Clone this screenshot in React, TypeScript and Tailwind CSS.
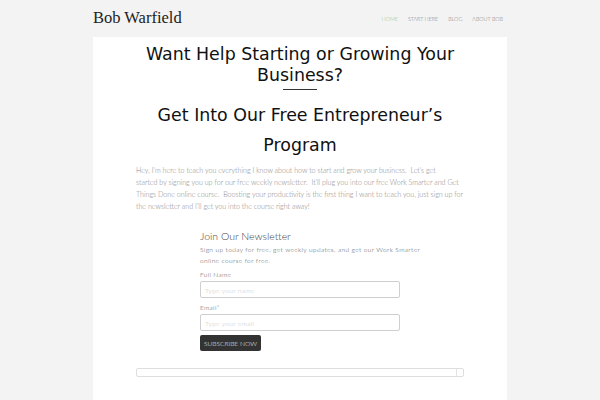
import React from "react";

const bodyFont = { fontFamily: "Lato, 'Open Sans', sans-serif" };

export default function App() {
  return (
    <div className="min-h-[400px] w-full bg-[#f3f3f3]" style={bodyFont}>
      <div className="mx-auto w-[414px]">
        {/* Header */}
        <header className="flex h-[37px] items-center justify-between pr-[4px]">
          <div
            className="pb-[1px] text-[16.5px] leading-none text-[#222]"
            style={{ fontFamily: "'Liberation Serif', 'DejaVu Serif', serif" }}
          >
            Bob Warfield
          </div>
          <nav className="flex gap-[10px] pt-[1px] text-[5.4px] font-light uppercase text-[#7a7a7a]">
            <a className="text-[#8cc58c]">Home</a>
            <a>Start Here</a>
            <a>Blog</a>
            <a>About Bob</a>
          </nav>
        </header>

        {/* Content */}
        <main className="min-h-[363px] bg-white px-[43px] pt-[7px]">
          <div
            className="text-center text-[#111]"
            style={{ fontFamily: "'DejaVu Sans', Verdana, sans-serif" }}
          >
            <h1 className="text-[17.4px] leading-[21px]">
              Want Help Starting or Growing Your
              <br />
              Business?
            </h1>
            <div className="mx-auto mt-[3px] h-px w-[34px] bg-[#333]" />
            <h2 className="mt-[10px] text-[17.4px] leading-[30px]">
              Get Into Our Free Entrepreneur’s
              <br />
              Program
            </h2>
          </div>

          <p className="mt-[5px] whitespace-nowrap text-[7.1px] font-light leading-[12px] text-[#888]">
            <span className="block">
              Hey, I’m here to teach you everything I know about how to start and grow your business.&nbsp; Let’s get
            </span>
            <span className="block">
              started by signing you up for our free weekly newsletter.&nbsp; It’ll plug you into our free Work Smarter and Get
            </span>
            <span className="block">
              Things Done online course.&nbsp; Boosting your productivity is the first thing I want to teach you, just sign up for
            </span>
            <span className="block">
              the newsletter and I’ll get you into the course right away!
            </span>
          </p>

          {/* Newsletter */}
          <section className="mx-auto mt-[16px] w-[200px] font-light">
            <h3 className="text-[10.5px] leading-[14px] text-[#444]">Join Our Newsletter</h3>
            <p className="mt-[1px] whitespace-nowrap text-[6.6px] leading-[11px] tracking-[0.35px] text-[#555]">
              Sign up today for free, get weekly updates, and get our Work Smarter
              <br />
              online course for free.
            </p>
            <label className="mt-[3px] block text-[6.6px] leading-[10px] tracking-[0.3px] text-[#555]">
              Full Name
            </label>
            <input
              className="mt-[2px] block h-[17px] w-full rounded-[2px] border border-[#cfcfcf] px-[4px] text-[6.6px] tracking-[0.3px] placeholder:text-[#c4c4c4] focus:outline-none"
              placeholder="Type your name"
            />
            <label className="mt-[4px] block text-[6.6px] leading-[10px] tracking-[0.3px] text-[#555]">
              Email*
            </label>
            <input
              className="mt-[2px] block h-[17px] w-full rounded-[2px] border border-[#cfcfcf] px-[4px] text-[6.6px] tracking-[0.3px] placeholder:text-[#c4c4c4] focus:outline-none"
              placeholder="Type your email"
            />
            <button className="mt-[4px] block h-[16px] rounded-[2px] bg-[#333] px-[4px] text-[6.6px] uppercase leading-none text-[#eee]">
              Subscribe Now
            </button>
          </section>

          <div className="mt-[17px] flex h-[9px] rounded-[2px] border border-[#dedede]">
            <div className="flex-1" />
            <div className="w-[7px] border-l border-[#e4e4e4]" />
          </div>
        </main>
      </div>
    </div>
  );
}
